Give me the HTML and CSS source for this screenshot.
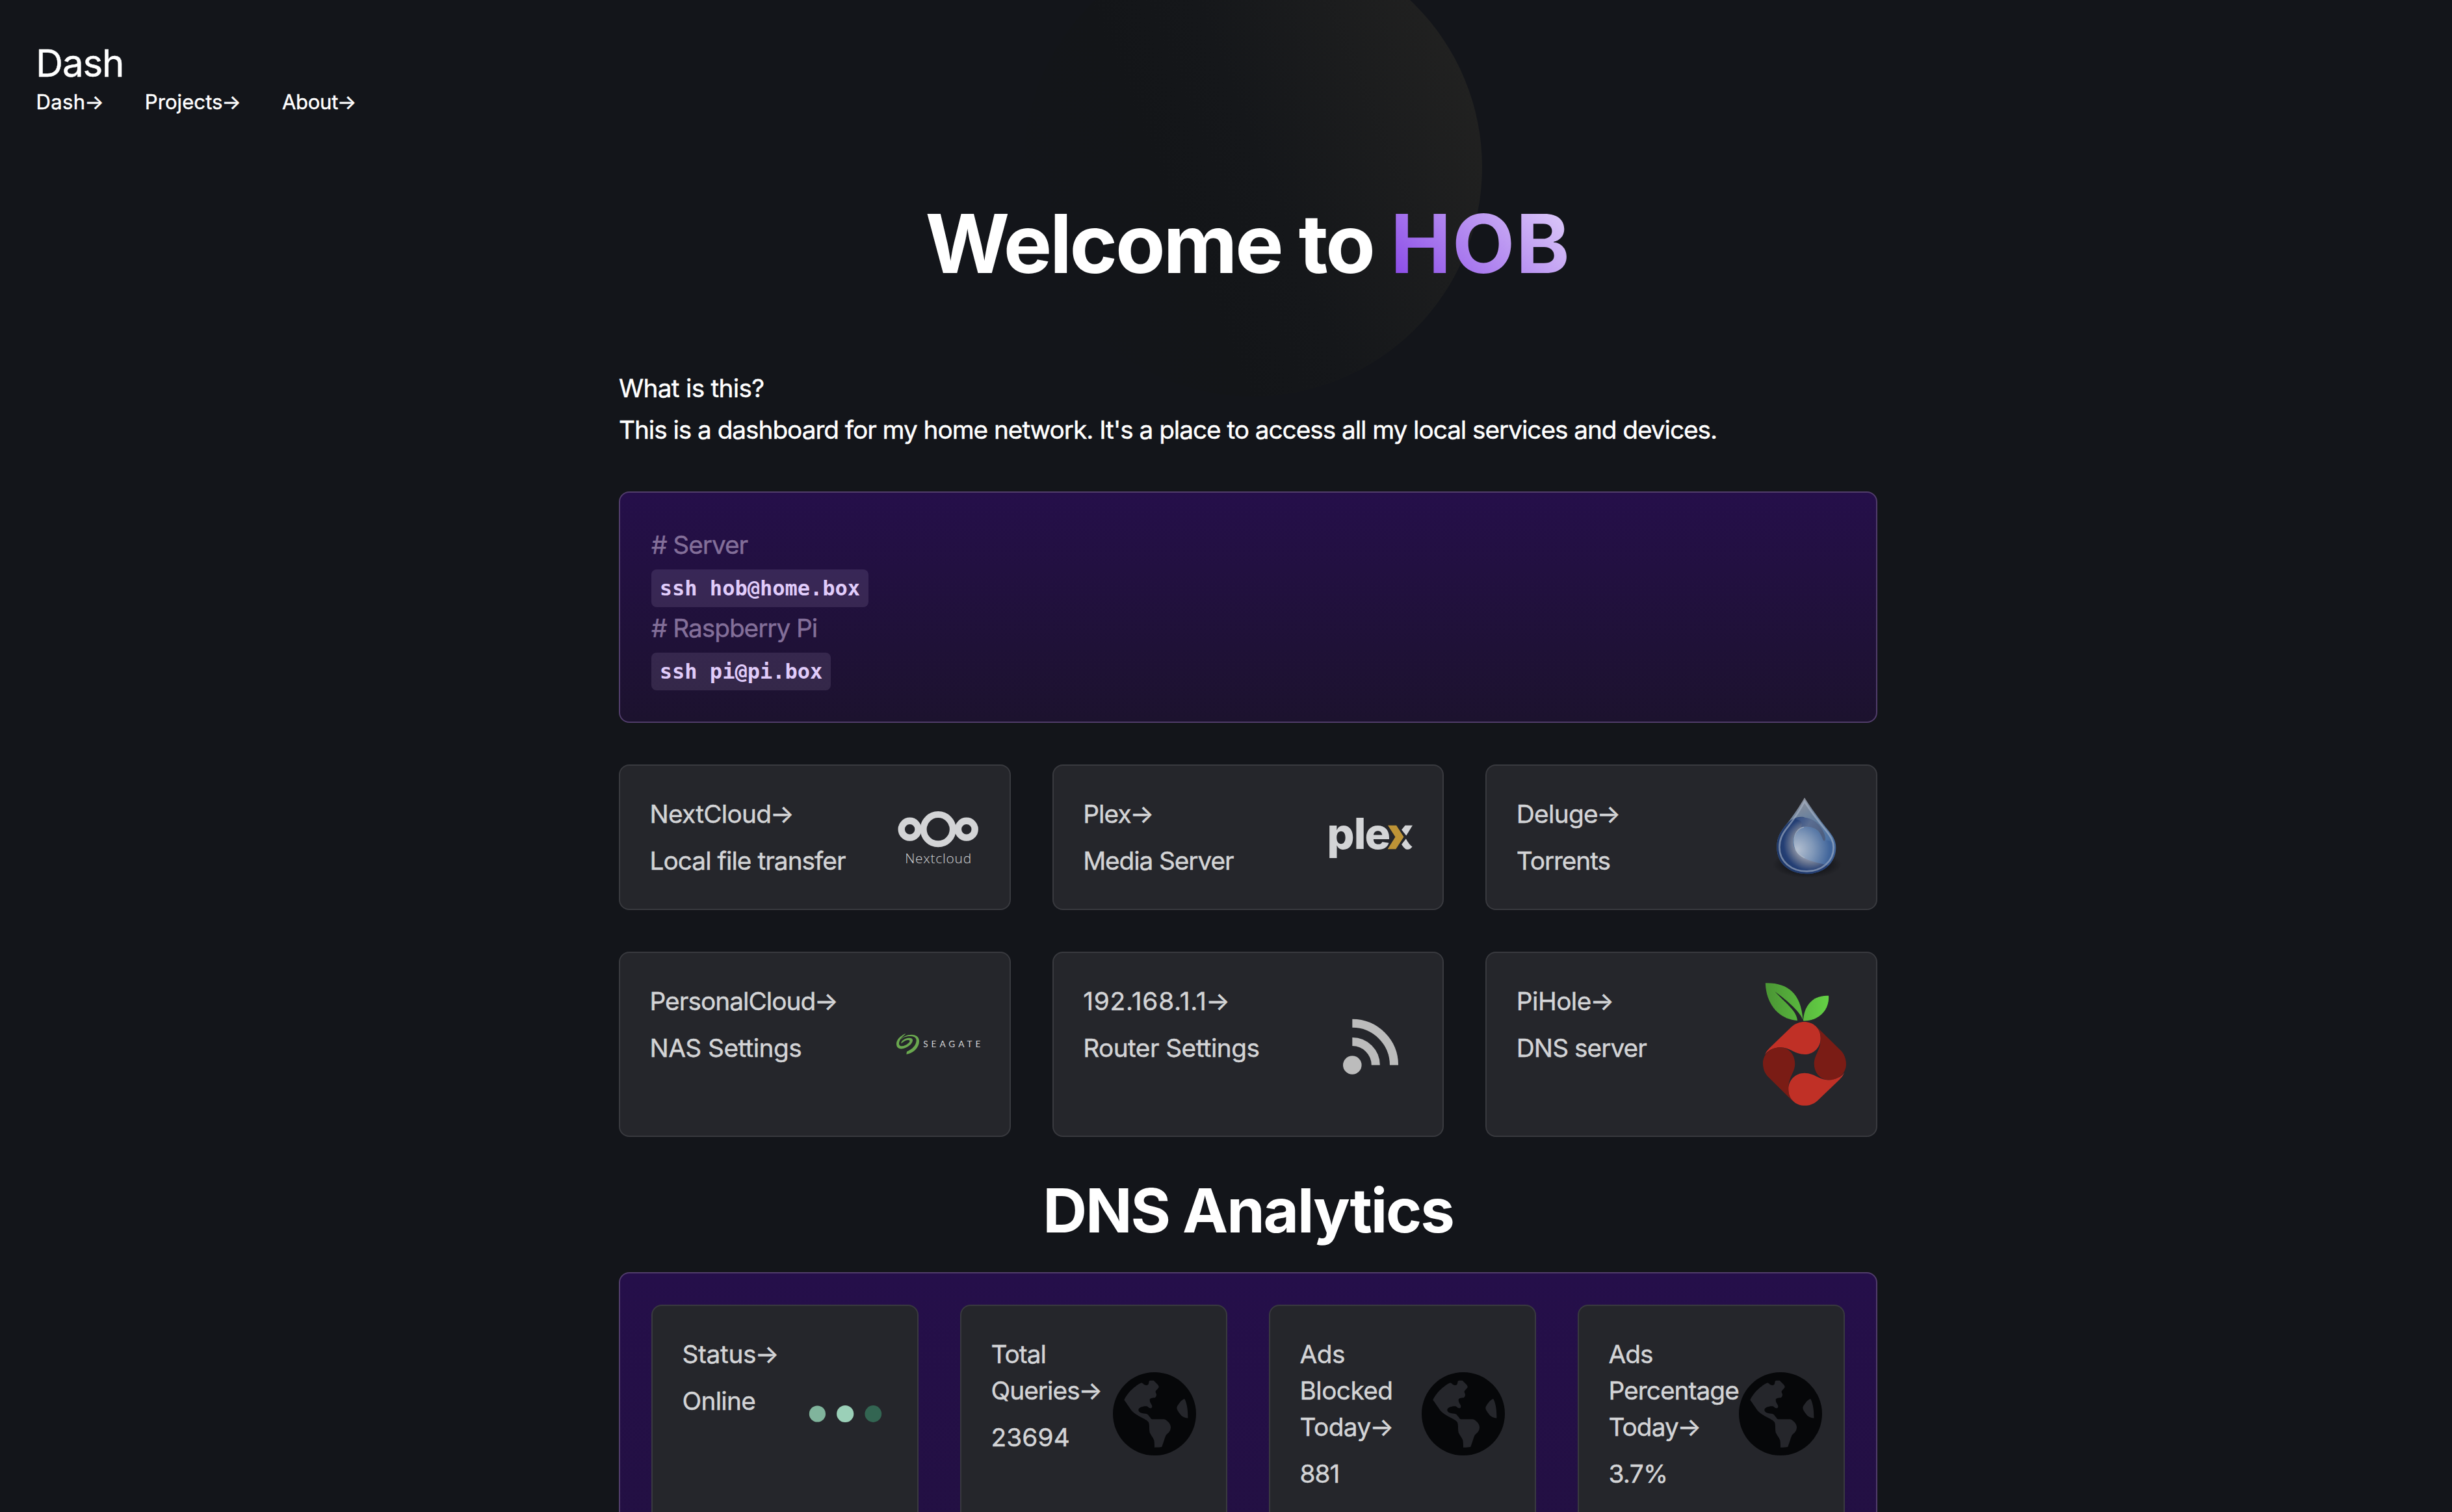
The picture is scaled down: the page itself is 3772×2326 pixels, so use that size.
FILE: index.html
```html
<!DOCTYPE html>
<html lang="en">
<head>
<meta charset="utf-8">
<title>Dash</title>
<link rel="stylesheet" href="styles.css">
</head>
<body>
<svg class="orb" viewBox="0 0 706 706" aria-hidden="true">
  <defs>
    <linearGradient id="orb-fill" x1="0" y1="0.65" x2="1" y2="0.25">
      <stop offset="0" stop-color="#13151a"/>
      <stop offset="0.3" stop-color="#131518"/>
      <stop offset="0.5" stop-color="#15171a"/>
      <stop offset="1" stop-color="#222221"/>
    </linearGradient>
  </defs>
  <circle cx="353" cy="353" r="353" fill="url(#orb-fill)"/>
</svg>

<header class="site-header">
  <div class="site-title">Dash</div>
  <nav class="site-nav">
    <a class="nav-link wide">Dash<span class="arrow">→</span></a>
    <a class="nav-link even">Projects<span class="arrow">→</span></a>
    <a class="nav-link snug">About<span class="arrow">→</span></a>
  </nav>
</header>

<main class="page">
  <h1 class="hero">Welcome to <span class="hero-name">HOB</span></h1>

  <div class="intro">
    <p class="snug-3">What is this?</p>
    <p>This is a dashboard for my home network. It's a place to access all my local services and devices.</p>
  </div>

  <section class="panel commands">
    <div class="line">#&nbsp;Server</div>
    <div class="line"><code>ssh hob@home.box</code></div>
    <div class="line">#&nbsp;Raspberry Pi</div>
    <div class="line"><code>ssh pi@pi.box</code></div>
  </section>

  <section class="links">
    <a class="card">
      <div class="card-text">
        <h2 class="snug-3">NextCloud<span class="arrow">→</span></h2>
        <p class="snug-5">Local file transfer</p>
      </div>
      <svg class="logo" viewBox="0 0 128 128">
        <g fill="none" stroke="#d3d4d6">
          <circle cx="64.2" cy="51.7" r="22.6" stroke-width="10"/>
          <circle cx="20.6" cy="51.7" r="12.9" stroke-width="10.4"/>
          <circle cx="107.8" cy="51.7" r="12.9" stroke-width="10.4"/>
        </g>
        <text class="nextcloud-word" x="13.2" y="103.5" textLength="101">Nextcloud</text>
      </svg>
    </a>

    <a class="card">
      <div class="card-text">
        <h2 class="snug-4">Plex<span class="arrow">→</span></h2>
        <p class="snug-6">Media Server</p>
      </div>
      <svg class="logo" viewBox="0 0 128 128">
        <text class="plex-word" x="-3.6 37.8 54.4" y="81.8">ple</text>
        <g transform="translate(-444.9 -74) scale(.4209 .3954)">
          <path fill="#bd9336" d="M1271 303H1302L1329 348L1300 395H1270L1298 348Z"/>
          <path fill="#d3d4d6" d="M1334 303H1361L1338 343L1321 320ZM1337 355C1344 370 1352 380 1360 386C1354 396 1345 399 1336 395C1330 391 1325 384 1321 377Z"/>
        </g>
      </svg>
    </a>

    <a class="card">
      <div class="card-text">
        <h2 class="snug-3">Deluge<span class="arrow">→</span></h2>
        <p class="snug-6">Torrents</p>
      </div>
      <svg class="logo" viewBox="0 0 128 128">
        <defs>
          <linearGradient id="drop-body" x1="0.45" y1="0" x2="0.75" y2="1">
            <stop offset="0" stop-color="#8d8f98"/>
            <stop offset="0.3" stop-color="#66809f"/>
            <stop offset="0.6" stop-color="#4d73a4"/>
            <stop offset="1" stop-color="#2f4e86"/>
          </linearGradient>
          <radialGradient id="drop-wave" gradientUnits="userSpaceOnUse" cx="195" cy="250" r="155">
            <stop offset="0.45" stop-color="#8a93a8"/>
            <stop offset="0.58" stop-color="#66738f"/>
            <stop offset="0.8" stop-color="#243f75"/>
            <stop offset="1" stop-color="#1f3868"/>
          </radialGradient>
          <radialGradient id="drop-eye" gradientUnits="userSpaceOnUse" cx="135" cy="275" r="150">
            <stop offset="0" stop-color="#b3bfd0"/>
            <stop offset="0.5" stop-color="#7f97b8"/>
            <stop offset="1" stop-color="#40659b"/>
          </radialGradient>
          <linearGradient id="drop-crest" x1="0" y1="0" x2="1" y2="0.5">
            <stop offset="0" stop-color="#294680"/>
            <stop offset="0.5" stop-color="#5a6d91"/>
            <stop offset="1" stop-color="#4e5f80"/>
          </linearGradient>
          <radialGradient id="drop-shadow">
            <stop offset="0.6" stop-color="#17181c"/>
            <stop offset="1" stop-color="#17181c" stop-opacity="0"/>
          </radialGradient>
        </defs>
        <g transform="translate(8 -9) scale(.33333)">
          <ellipse cx="180" cy="345" rx="160" ry="62" fill="url(#drop-shadow)"/>
          <path fill="url(#drop-body)" d="M168 36C190 72 230 128 270 178C297 210 313 235 313 266C313 338 255 388 178 388C100 388 40 342 40 265C40 225 52 198 84 160C116 120 150 68 168 36Z"/>
          <path fill="url(#drop-wave)" d="M84 160C110 130 135 122 165 126C180 140 190 155 195 170C150 168 115 195 115 240C115 290 160 315 262 345C285 350 270 362 250 370C228 382 204 388 178 388C100 388 40 342 40 265C40 225 52 198 84 160Z"/>
          <path fill="url(#drop-eye)" d="M165 171C190 164 225 176 250 222C262 245 295 220 302 262C302 300 290 330 262 345C200 330 150 320 128 280C108 232 130 182 165 171Z"/>
          <path fill="none" stroke="#b4bdcb" stroke-opacity=".7" stroke-width="4" d="M165 172C125 180 108 230 128 278C135 292 150 305 168 314"/>
          <path fill="url(#drop-crest)" d="M118 134C160 118 205 130 233 160C252 182 266 210 264 230C258 242 252 232 250 222C236 186 215 172 182 170C168 169 158 171 150 174C165 150 150 138 118 134Z"/>
          <path fill="none" stroke="#a9b6ca" stroke-opacity=".6" stroke-width="8" d="M168 54C192 92 230 142 264 184C290 216 302 238 302 266C302 330 248 376 178 376C108 376 52 332 52 265C52 230 64 204 92 170C120 134 150 88 168 54Z"/>
        </g>
      </svg>
    </a>

    <a class="card">
      <div class="card-text">
        <h2 class="snug-5">PersonalCloud<span class="arrow">→</span></h2>
        <p class="snug-2">NAS Settings</p>
      </div>
      <svg class="logo" viewBox="0 0 128 128">
        <g fill="#6aa84f" transform="translate(-19 27.7) scale(.33333)">
          <path d="M103 157L105 144C130 134 149 115 149 92C149 76 128 71 108 74C96 76 85 80 78 88C84 76 105 66 127 66C150 66 162 79 162 96C162 126 135 151 103 157Z"/>
          <path d="M98 61C70 75 57 92 57 108C57 128 72 135 92 129C114 123 132 106 132 92C132 79 112 79 98 85C86 91 76 100 80 107C86 101 95 93 108 91C121 89 122 97 112 105C100 116 84 122 74 117C62 109 72 84 98 64Z"/>
        </g>
        <text class="seagate-word" x="41.2" y="69.2" textLength="87">SEAGATE</text>
      </svg>
    </a>

    <a class="card">
      <div class="card-text">
        <h2 class="ip">192.168.1.1<span class="arrow">→</span></h2>
        <p class="snug-2">Router Settings</p>
      </div>
      <svg class="logo" viewBox="0 0 128 128">
        <circle cx="35.3" cy="96.5" r="14.3" fill="#bcbcbc"/>
        <g fill="none" stroke="#bcbcbc" stroke-width="13.1">
          <path d="M35.3 60.5a36 36 0 0 1 36 36"/>
          <path d="M35.3 32.3a64.2 64.2 0 0 1 64.2 64.2"/>
        </g>
      </svg>
    </a>

    <a class="card">
      <div class="card-text">
        <h2 class="snug-2">PiHole<span class="arrow">→</span></h2>
        <p class="snug-5">DNS server</p>
      </div>
      <svg class="logo logo-tall" viewBox="0 0 128 188.5">
        <defs>
          <linearGradient id="leaf" gradientUnits="userSpaceOnUse" x1="1083" y1="0" x2="1315" y2="0">
            <stop offset="0" stop-color="#4a9434"/>
            <stop offset="1" stop-color="#64d145"/>
          </linearGradient>
          <g id="petals">
            <path fill="#c03026" d="M1080 1196Q1086 1181 1098 1169L1178 1087C1205 1060 1245 1062 1266 1083C1280 1097 1285 1113 1285 1131C1285 1166 1260 1194 1226 1194C1190 1194 1175 1168 1138 1167C1112 1167 1092 1180 1080 1196Z"/>
            <path fill="#7a1c15" d="M1270 1086L1358 1178C1372 1193 1378 1212 1378 1232C1378 1268 1350 1294 1316 1294C1283 1294 1261 1266 1261 1230C1261 1195 1285 1180 1285 1131C1285 1113 1280 1098 1270 1086Z"/>
          </g>
        </defs>
        <g transform="scale(.4209 .3943) translate(-1074 -915)">
          <path fill="url(#leaf)" d="M1083 916C1170 914 1214 962 1220 1060C1212 1030 1165 985 1118 949C1160 997 1198 1025 1200 1062C1138 1058 1086 1005 1083 916Z"/>
          <path fill="url(#leaf)" d="M1221 1063C1224 1002 1258 962 1314 965C1318 1018 1280 1065 1221 1063Z"/>
          <use href="#petals"/>
          <use href="#petals" transform="rotate(180 1226 1230.5)"/>
        </g>
      </svg>
    </a>
  </section>

  <h2 class="section-title">DNS Analytics</h2>

  <section class="panel stats">
    <a class="card">
      <div class="card-text">
        <h2 class="snug-1">Status<span class="arrow">→</span></h2>
        <p class="snug-3">Online</p>
      </div>
      <svg class="logo" viewBox="0 0 128 128">
        <circle cx="20.4" cy="64" r="12.6" fill="#80b49c"/>
        <circle cx="63.2" cy="64" r="13.1" fill="#9bd0b8"/>
        <circle cx="106.3" cy="64" r="12.9" fill="#336552"/>
      </svg>
    </a>
    <a class="card">
      <div class="card-text">
        <h2 class="snug-5">Total Queries<span class="arrow">→</span></h2>
        <p class="even">23694</p>
      </div>
      <svg class="logo" viewBox="0 0 128 128">
        <defs>
          <path id="globe" fill="#060709" fill-rule="evenodd" transform="translate(-12 -11) scale(.33333)" d="M228 33A192 192 0 1 1 228 417A192 192 0 1 1 228 33ZM88 161C98 138 118 115 140 99C150 91 158 86 168 82C176 84 178 92 190 93C200 93 201 86 202 81C202 72 206 71 214 71H224L242 89C247 94 249 99 247 104L234 119C230 124 237 131 237 137C237 144 232 151 226 151C217 151 206 154 206 161C206 170 212 178 215 184C220 194 215 200 208 199C200 198 198 189 188 190C172 190 154 197 154 207C154 219 170 223 186 224C200 225 200 234 207 240C211 245 211 250 220 250H270C282 250 303 270 303 286C303 306 292 313 282 322C275 335 272 352 262 377C252 379 242 380 228 380C228 368 228 358 226 347C222 334 210 322 206 311C203 298 205 284 203 272C202 258 188 253 176 246C150 232 130 222 118 204C108 189 98 174 88 161ZM366 155C375 168 383 200 382 245C366 244 354 238 346 226C338 214 331 207 331 197C332 187 340 180 346 171C352 163 358 159 366 155Z"/>
        </defs>
        <use href="#globe"/>
      </svg>
    </a>
    <a class="card">
      <div class="card-text">
        <h2 class="snug-2">Ads Blocked Today<span class="arrow">→</span></h2>
        <p>881</p>
      </div>
      <svg class="logo" viewBox="0 0 128 128"><use href="#globe"/></svg>
    </a>
    <a class="card">
      <div class="card-text">
        <h2 class="snug-5">Ads Percentage Today<span class="arrow">→</span></h2>
        <p class="snug-3">3.7%</p>
      </div>
      <svg class="logo" viewBox="0 0 128 128"><use href="#globe"/></svg>
    </a>
  </section>
</main>
</body>
</html>
```
FILE: styles.css
```css
* {
  box-sizing: border-box;
  margin: 0;
  padding: 0;
}

html {
  height: 100%;
  overflow: hidden;
  background: #13151a;
}

body {
  position: relative;
  height: 100%;
  overflow: hidden;
  color: #fff;
  font-family: Inter, "Liberation Sans", sans-serif;
  font-size: 38.8px;
  font-weight: 400;
  line-height: 64px;
  letter-spacing: -0.0273em;
  -webkit-text-stroke: 0.45px;
}

/* Letter fit */
.wide { letter-spacing: 0.0115em; }
.even { letter-spacing: 0.003em; }
.ip { letter-spacing: 0.0208em; }
.snug { letter-spacing: -0.008em; }
.snug-1 { letter-spacing: -0.0087em; }
.snug-2 { letter-spacing: -0.0145em; }
.snug-3 { letter-spacing: -0.0185em; }
.snug-4 { letter-spacing: -0.0225em; }
.snug-5 { letter-spacing: -0.0248em; }
.snug-6 { letter-spacing: -0.0285em; }

/* Faint disc behind the heading */
.orb {
  position: absolute;
  top: -96px;
  left: 1574px;
  width: 706px;
  height: 706px;
  z-index: -1;
}

.site-header {
  padding: 61px 55px 0;
}

.site-title {
  font-size: 58.3px;
  line-height: 72px;
  letter-spacing: -0.02em;
}

.site-nav {
  display: flex;
  gap: 63px;
  padding-left: 0.5px;
  font-size: 31px;
  line-height: 48px;
}

.arrow {
  margin-left: -0.04em;
  letter-spacing: 0;
}

.page {
  width: 1936px;
  margin: 130px 0 0 952px;
}

.hero {
  margin-bottom: 126px;
  font-size: 125px;
  font-weight: 700;
  line-height: 128px;
  letter-spacing: -0.0258em;
  text-align: center;
  -webkit-text-stroke: 0;
}

.hero-name {
  background: linear-gradient(45deg, #8440e6, #e4d6fa);
  -webkit-background-clip: text;
  background-clip: text;
  color: transparent;
  letter-spacing: 0.0136em;
}

.intro {
  margin-bottom: 63px;
}

.panel {
  padding: 48px;
  border: 2px solid #513d6b;
  border-radius: 16px;
  background: linear-gradient(#250f4a, #1c122e);
}

.commands {
  height: 356px;
  margin-bottom: 64px;
  color: #836f99;
}

.line {
  height: 64px;
}

code {
  display: inline-block;
  height: 58px;
  padding: 0 12.8px;
  border-radius: 8px;
  background: rgba(224, 204, 250, 0.12);
  color: #e0ccfa;
  font: 700 32px/58px "DejaVu Sans Mono", monospace;
  letter-spacing: 0;
  vertical-align: top;
  margin-top: 6px;
  -webkit-text-stroke: 0;
}

.links {
  display: grid;
  grid-template-columns: repeat(3, 1fr);
  gap: 64px;
}

.card {
  display: flex;
  justify-content: space-between;
  padding: 46px 46px 46px 45.5px;
  border: 2px solid #393a3f;
  border-radius: 16px;
  background: #25262b;
  color: #d3d4d6;
  line-height: 56px;
}

.card h2 {
  margin-bottom: 16px;
  font-size: inherit;
  font-weight: inherit;
}

.logo {
  flex: none;
  align-self: center;
  width: 128px;
  height: 128px;
  overflow: visible;
  -webkit-text-stroke: 0;
}

.logo-tall {
  height: 188.5px;
}

.nextcloud-word {
  fill: #d3d4d6;
  font: 300 21px "Open Sans", "Noto Sans", sans-serif;
}

.plex-word {
  fill: #d3d4d6;
  font: 800 66px Inter, sans-serif;
  letter-spacing: 0;
}

.seagate-word {
  fill: #d3d4d6;
  font: 400 13.6px Lato, sans-serif;
}

.section-title {
  margin: 55.5px 0 36.5px;
  font-size: 94px;
  font-weight: 700;
  line-height: 116px;
  letter-spacing: -0.0226em;
  text-align: center;
  -webkit-text-stroke: 0;
}

.stats {
  display: grid;
  grid-template-columns: repeat(4, minmax(0, 1fr));
  gap: 64px;
  background: linear-gradient(#250f4a, #1c122e 1500px);
}
```
